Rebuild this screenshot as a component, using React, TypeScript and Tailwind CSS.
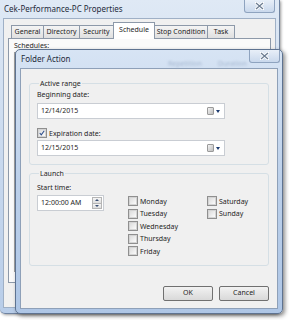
import React from "react";

const font = { fontFamily: '"Noto Sans", "Open Sans", sans-serif' };

function CloseBtn() {
  return (
    <div className="flex h-[13px] w-[31px] items-center justify-center rounded-b-[3px] border border-t-0 border-[#8ea3bf] bg-gradient-to-b from-[#e8eff8] to-[#c9d8ec]">
      <svg width="9" height="8" viewBox="0 0 9 8">
        <path d="M1 1 L8 7 M8 1 L1 7" stroke="#ffffff" strokeWidth="3" strokeLinecap="square" />
        <path d="M1 1 L8 7 M8 1 L1 7" stroke="#6d7d92" strokeWidth="1.3" />
      </svg>
    </div>
  );
}

function CheckBox({ checked = false }: { checked?: boolean }) {
  return (
    <div className="flex h-[10px] w-[10px] items-center justify-center border border-[#8f8f8f] bg-white">
      <div className="flex h-[8px] w-[8px] items-center justify-center border border-[#d4d4d4] bg-gradient-to-br from-[#dcdcdc] to-[#fbfbfb]">
        {checked && (
          <svg width="8" height="8" viewBox="0 0 8 8">
            <path d="M1 4 L3 6.5 L7 1" stroke="#2b4c8c" strokeWidth="1.4" fill="none" />
          </svg>
        )}
      </div>
    </div>
  );
}

function DateBox({ value }: { value: string }) {
  return (
    <div className="flex h-[16px] w-[188px] items-center justify-between border border-[#c9cdd3] bg-white pl-[3px] pr-[4px]">
      <span className="text-[7px] text-[#1e1e1e]">{value}</span>
      <div className="flex items-center gap-[2px]">
        <div className="h-[8px] w-[7px] rounded-[1px] border border-[#9a9a9a] bg-gradient-to-br from-[#f4f4f4] to-[#bdbdbd]" />
        <svg width="4" height="3" viewBox="0 0 4 3">
          <path d="M0 0 H4 L2 3 Z" fill="#1d3c70" />
        </svg>
      </div>
    </div>
  );
}

function Day({ label }: { label: string }) {
  return (
    <div className="flex h-[12.5px] items-center gap-[2px]">
      <CheckBox />
      <span className="text-[7px] leading-none text-[#1e1e1e]">{label}</span>
    </div>
  );
}

const tabCls =
  "flex h-[13px] items-center justify-center whitespace-nowrap border border-b-0 border-[#8d99a9] bg-gradient-to-b from-[#f4f4f4] to-[#e0e0e0]";

export default function App() {
  return (
    <div className="relative h-[320px] w-[289px] overflow-hidden bg-white" style={font}>
      {/* Back window */}
      <div className="absolute left-0 top-0 flex h-[314px] w-[280px] flex-col rounded-b-[5px] border-r border-b border-[#6f83a0] bg-gradient-to-b from-[#dfe9f5] via-[#c9d9ee] to-[#b8cde9] shadow-[1px_1px_3px_rgba(0,0,0,0.4)]">
        <div className="flex h-[18px] items-center justify-between pl-[4px] pr-[4px]">
          <span className="text-[8px] text-[#1e2a3a]">Cek-Performance-PC Properties</span>
          <div className="self-start">
            <CloseBtn />
          </div>
        </div>
        <div className="mx-[3px] mb-[5px] flex-1 border border-[#9fb0c6] bg-[#f0f0f0] pt-[3px]">
          {/* tabs */}
          <div className="ml-[7px] flex items-end text-[7px] text-[#1e1e1e]">
            <div className={`${tabCls} w-[33px]`}>General</div>
            <div className={`${tabCls} ml-[-1px] w-[37px]`}>Directory</div>
            <div className={`${tabCls} ml-[-1px] w-[35px]`}>Security</div>
            <div className="relative z-10 ml-[-1px] mb-[-1px] flex h-[17px] w-[42px] items-start justify-center border border-b-0 border-[#8d99a9] bg-white pt-[2px]">Schedule</div>
            <div className={`${tabCls} ml-[-1px] w-[54px]`}>Stop Condition</div>
            <div className={`${tabCls} ml-[-1px] w-[28px]`}>Task</div>
          </div>
          <div className="ml-[4px] mr-[4px] h-[245px] border border-[#8d99a9] bg-[#fafafa] pl-[5px] pt-[2px]">
            <div className="text-[7px] leading-[9px] text-[#1e1e1e]">Schedules:</div>
            <div className="mt-[2px] h-[220px] w-[250px] border border-[#a0a0a0] bg-white" />
          </div>
        </div>
      </div>

      {/* Front window */}
      <div className="absolute left-[15px] top-[49px] flex h-[265px] w-[268px] flex-col rounded-t-[5px] rounded-b-[5px] border border-[#5e7391] bg-gradient-to-b from-[#d7e4f4] via-[#bcd0ea] to-[#aec6e6] shadow-[2px_2px_4px_rgba(0,0,0,0.45)]">
        <div className="relative flex h-[18px] items-center justify-between pl-[5px] pr-[2px]">
          <span className="text-[8px] text-[#1e2a3a]">Folder Action</span>
          <div className="absolute left-[152px] top-[9px] flex gap-[16px] text-[7px] text-[#a6b8d0] blur-[1.2px]">
            <span>Repetition</span>
            <span>Duration</span>
          </div>
          <div className="self-start">
            <CloseBtn />
          </div>
        </div>
        <div className="mx-[4px] mb-[4px] flex flex-1 flex-col border border-[#8ea0b8] bg-[#f0f0f0] px-[8px] pt-[9px] text-[#1e1e1e]">
          {/* Active range */}
          <fieldset className="rounded-[3px] border border-[#d5dfe5] px-[7px] pb-[8px]">
            <legend className="ml-[2px] px-[1px] text-[7px] leading-[11px]">Active range</legend>
            <div className="text-[7px] leading-[11px]">Beginning date:</div>
            <div className="mt-[3px]">
              <DateBox value="12/14/2015" />
            </div>
            <div className="mt-[9px] flex items-center gap-[2px]">
              <CheckBox checked />
              <span className="text-[7px] leading-none">Expiration date:</span>
            </div>
            <div className="mt-[2px]">
              <DateBox value="12/15/2015" />
            </div>
          </fieldset>

          {/* Launch */}
          <fieldset className="mt-[3px] h-[98px] rounded-[3px] border border-[#d5dfe5] px-[7px] pt-[3px]">
            <legend className="ml-[2px] px-[1px] text-[7px] leading-[11px]">Launch</legend>
            <div className="flex">
              <div className="flex w-[91px] flex-col">
                <div className="text-[7px] leading-[11px]">Start time:</div>
                <div className="mt-[2px] flex h-[16px] w-[67px] items-center justify-between border border-[#c9cdd3] bg-white pl-[3px] pr-[1px]">
                  <span className="text-[7px]">12:00:00 AM</span>
                  <div className="flex h-[12px] w-[10px] flex-col border border-[#b5b5b5]">
                    <div className="flex flex-1 items-center justify-center bg-gradient-to-b from-[#f6f6f6] to-[#dedede]">
                      <svg width="4" height="2" viewBox="0 0 4 2"><path d="M0 2 H4 L2 0 Z" fill="#3a4f72" /></svg>
                    </div>
                    <div className="flex flex-1 items-center justify-center border-t border-[#b5b5b5] bg-gradient-to-b from-[#f6f6f6] to-[#dedede]">
                      <svg width="4" height="2" viewBox="0 0 4 2"><path d="M0 0 H4 L2 2 Z" fill="#3a4f72" /></svg>
                    </div>
                  </div>
                </div>
              </div>
              <div className="mt-[13px] flex w-[79px] flex-col">
                <Day label="Monday" />
                <Day label="Tuesday" />
                <Day label="Wednesday" />
                <Day label="Thursday" />
                <Day label="Friday" />
              </div>
              <div className="mt-[13px] flex flex-col">
                <Day label="Saturday" />
                <Day label="Sunday" />
              </div>
            </div>
          </fieldset>

          {/* Buttons */}
          <div className="mt-[20px] flex justify-end gap-[6px] text-[7px]">
            <button className="flex h-[15px] w-[50px] items-center justify-center rounded-[2px] border border-[#707070] bg-gradient-to-b from-[#f2f2f2] to-[#d9d9d9]">OK</button>
            <button className="flex h-[15px] w-[50px] items-center justify-center rounded-[2px] border border-[#707070] bg-gradient-to-b from-[#f2f2f2] to-[#d9d9d9]">Cancel</button>
          </div>
        </div>
      </div>
    </div>
  );
}
